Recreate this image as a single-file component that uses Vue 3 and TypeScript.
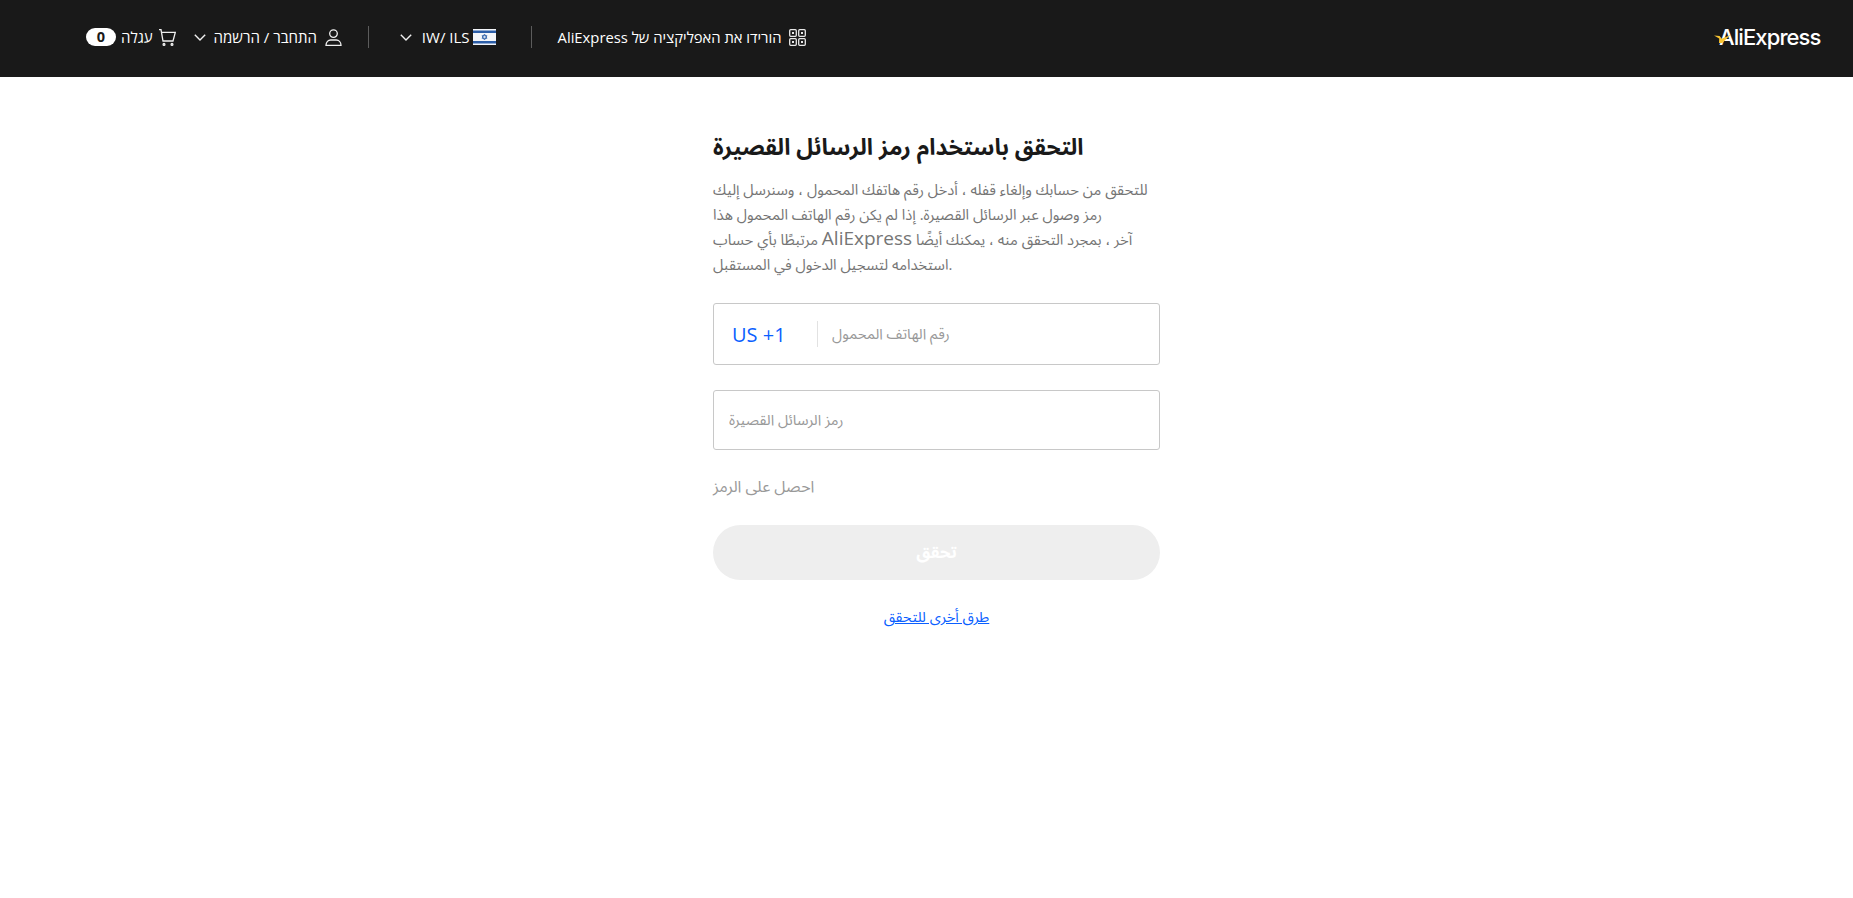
<script setup lang="ts">
const descLine1 =
  'للتحقق من حسابك وإلغاء قفله ، أدخل رقم هاتفك المحمول ، وسنرسل إليك'
const descLine2 =
  'رمز وصول عبر الرسائل القصيرة. إذا لم يكن رقم الهاتف المحمول هذا'
const descLine3a = 'مرتبطًا بأي حساب '
const descLine3b = ' آخر ، بمجرد التحقق منه ، يمكنك أيضًا'
const descLine4 = 'استخدامه لتسجيل الدخول في المستقبل.'
</script>

<template>
  <div class="page">
    <header class="topbar">
      <a class="logo" dir="ltr">
        <svg class="logo-star" viewBox="0 0 17 9" width="17" height="9">
          <path d="M0 .6 L5.6 1 L7.8 3.8 L16.5 0 L8.2 8 L5 8 L5.2 3.6 Z" fill="#f7c331" />
        </svg>
        <span class="logo-text">AliExpress</span>
      </a>
      <nav class="nav">
        <div class="nav-group app">
          <svg viewBox="0 0 17 17" width="17" height="17" fill="none" stroke="#e8e8e8" stroke-width="1.3">
            <rect x=".7" y=".7" width="6.6" height="6.6" rx="1" />
            <rect x="9.7" y=".7" width="6.6" height="6.6" rx="1" />
            <rect x=".7" y="9.7" width="6.6" height="6.6" rx="1" />
            <rect x="9.7" y="9.7" width="6.6" height="6.6" rx="1" />
            <rect x="3" y="3" width="2" height="2" fill="#e8e8e8" stroke="none" />
            <rect x="12" y="3" width="2" height="2" fill="#e8e8e8" stroke="none" />
            <rect x="3" y="12" width="2" height="2" fill="#e8e8e8" stroke="none" />
            <rect x="12" y="12" width="2" height="2" fill="#e8e8e8" stroke="none" />
          </svg>
          <span class="app-label">הורידו את האפליקציה של AliExpress</span>
        </div>
        <i class="rule"></i>
        <div class="nav-group locale">
          <svg class="flag" viewBox="0 0 23 16" width="23" height="16">
            <rect width="23" height="16" fill="#f4f6fa" />
            <rect y="1.5" width="23" height="2.5" fill="#2c5ea8" />
            <rect y="12" width="23" height="2.5" fill="#2c5ea8" />
            <path d="M11.5 5 L14 9.3 H9 Z M11.5 11 L9 6.7 H14 Z" fill="none" stroke="#2c5ea8" stroke-width=".8" />
          </svg>
          <span dir="ltr">IW/ ILS</span>
          <svg class="chev" viewBox="0 0 12 7" width="12" height="7" fill="none" stroke="#f0f0f0" stroke-width="1.4">
            <path d="M.8 .8 L6 6 L11.2 .8" />
          </svg>
        </div>
        <i class="rule"></i>
        <div class="nav-group account">
          <svg viewBox="0 0 17 17" width="17" height="17" fill="none" stroke="#f0f0f0" stroke-width="1.3">
            <circle cx="8.5" cy="4.6" r="3.8" />
            <path d="M1 16.3 C1 12.8 3.4 11 5.6 11 H11.4 C13.6 11 16 12.8 16 16.3 Z" />
          </svg>
          <span>התחבר / הרשמה</span>
          <svg class="chev" viewBox="0 0 12 7" width="12" height="7" fill="none" stroke="#f0f0f0" stroke-width="1.4">
            <path d="M.8 .8 L6 6 L11.2 .8" />
          </svg>
        </div>
        <div class="nav-group cart">
          <svg viewBox="0 0 17 17" width="17" height="17" fill="none" stroke="#f0f0f0" stroke-width="1.3">
            <path d="M0 .7 H2 L4 12 H14 L16.3 3.4 H2.6" />
            <circle cx="5" cy="15.4" r=".9" />
            <circle cx="13" cy="15.4" r=".9" />
          </svg>
          <span>עגלה</span>
          <b class="badge">0</b>
        </div>
      </nav>
    </header>

    <main class="content">
      <section class="panel">
        <h1 class="title">التحقق باستخدام رمز الرسائل القصيرة</h1>
        <div class="desc">
          <p>{{ descLine1 }}</p>
          <p>{{ descLine2 }}</p>
          <p>{{ descLine3a }}<span class="latin">AliExpress</span>{{ descLine3b }}</p>
          <p>{{ descLine4 }}</p>
        </div>

        <div class="field phone">
          <span class="code">US +1</span>
          <i class="field-rule"></i>
          <input class="input" type="text" placeholder="رقم الهاتف المحمول" />
        </div>

        <div class="field sms">
          <input class="input" type="text" placeholder="رمز الرسائل القصيرة" />
        </div>

        <div class="get-code">احصل على الرمز</div>
        <button class="submit" type="button" disabled>تحقق</button>
        <a class="other" href="#">طرق أخرى للتحقق</a>
      </section>
    </main>
  </div>
</template>

<style>
html, body { margin: 0; background: #fff; }
</style>

<style scoped>
.page {
  min-height: 898px;
  font-family: "Open Sans", sans-serif;
  background: #fff;
}
.topbar {
  direction: rtl;
  box-sizing: border-box;
  height: 77px;
  background: #191919;
  display: flex;
  align-items: center;
  justify-content: space-between;
  padding: 0 33px 3px 86px;
  color: #fff;
  font-size: 15px;
}
.logo {
  display: flex;
  align-items: center;
  position: relative;
  height: 30px;
  width: 106px;
}
.logo-text {
  font-family: Inter, "Open Sans", sans-serif;
  font-weight: 500;
  font-size: 22px;
  letter-spacing: -0.9px;
  color: #fff;
  margin-left: 5px;
}
.logo-star {
  position: absolute;
  left: 0;
  top: 13px;
  z-index: 1;
}
.nav {
  display: flex;
  align-items: center;
  height: 24px;
}
.nav-group {
  display: flex;
  align-items: center;
  gap: 8px;
  white-space: nowrap;
}
.rule {
  width: 1px;
  height: 22px;
  background: #5c5c5c;
  display: block;
}
.app { margin-left: 26px; gap: 7px; }
.app-label { font-size: 14.8px; }
.locale { margin: 0 35px 0 31px; gap: 3px; }
.locale .chev { margin-right: 7px; }
.flag { flex: none; }
.account { margin-right: 26px; }
.cart { margin-right: 18px; gap: 6px; }
.badge {
  width: 30px;
  height: 18px;
  border-radius: 9px;
  background: #fff;
  color: #191919;
  font-size: 14.5px;
  font-weight: 700;
  line-height: 18px;
  text-align: center;
  margin-right: -1px;
}
.content {
  display: flex;
  justify-content: center;
  padding: 53px 0 0 20px;
}
.panel {
  width: 447px;
  display: flex;
  flex-direction: column;
  font-family: "Open Sans", "Noto Sans Arabic", sans-serif;
}
.title {
  margin: 0;
  font-size: 22.8px;
  font-weight: 700;
  line-height: 33px;
  color: #191919;
  white-space: nowrap;
}
.desc {
  margin-top: 14px;
  font-size: 14.8px;
  line-height: 25px;
  color: #757575;
}
.desc p {
  margin: 0;
  white-space: nowrap;
}
.latin {
  font-size: 19px;
  line-height: 1;
}
.field {
  display: flex;
  align-items: center;
  box-sizing: border-box;
  border: 1px solid #c8c8c8;
  border-radius: 3px;
}
.phone {
  height: 62px;
  margin-top: 26px;
  padding-left: 18px;
}
.sms {
  height: 60px;
  margin-top: 25px;
  padding-left: 15px;
}
.code {
  width: 85px;
  flex: none;
  color: #0b5fff;
  font-size: 20px;
  font-weight: 500;
}
.field-rule {
  width: 1px;
  height: 26px;
  background: #e2e2e2;
  margin-right: 14px;
  flex: none;
}
.input {
  flex: 1;
  min-width: 0;
  border: 0;
  outline: 0;
  padding: 0 0 3px;
  background: transparent;
  font-family: inherit;
  font-size: 14.7px;
  color: #191919;
}
.input::placeholder {
  color: #999;
  opacity: 1;
}
.get-code {
  margin-top: 24px;
  font-size: 16px;
  line-height: 24px;
  color: #999;
}
.submit {
  margin-top: 27px;
  height: 55px;
  border: 0;
  border-radius: 28px;
  background: #eee;
  color: #fff;
  font-family: inherit;
  font-size: 17px;
  font-weight: 700;
  padding: 0;
}
.other {
  margin-top: 25px;
  align-self: center;
  font-size: 14.7px;
  line-height: 22px;
  color: #0b5fff;
  text-decoration: underline;
}
</style>
